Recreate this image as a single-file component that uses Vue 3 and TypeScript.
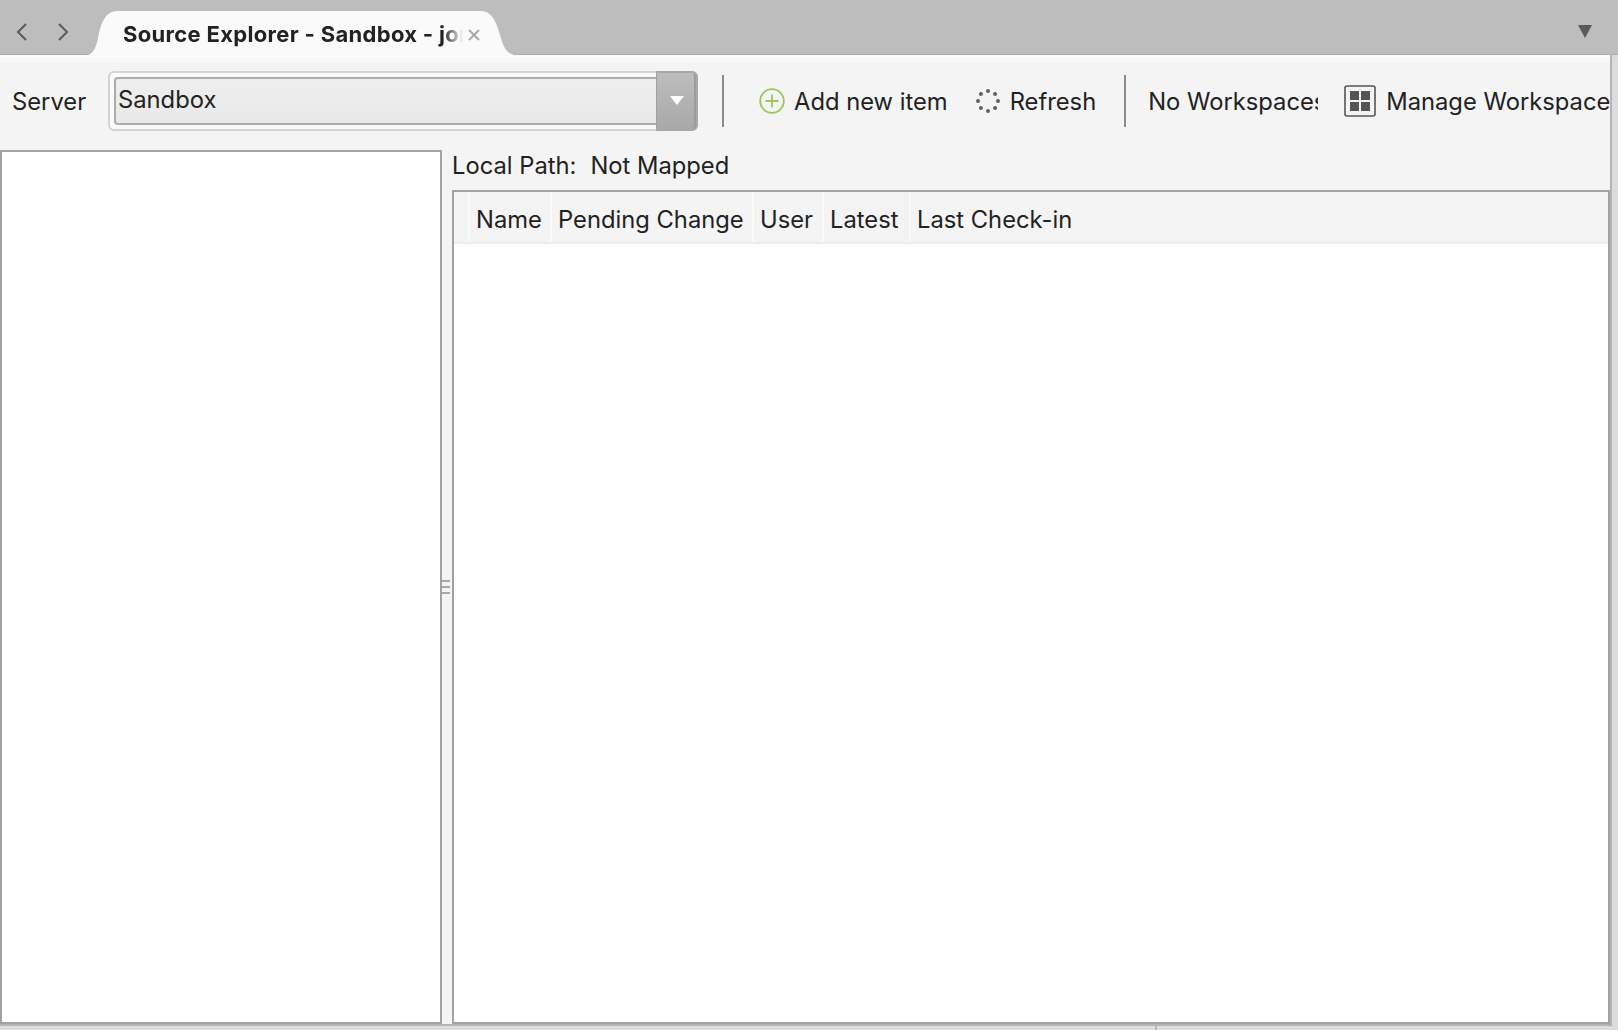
<script setup lang="ts">
const columns = [
  { label: '', width: 16 },
  { label: 'Name', width: 82 },
  { label: 'Pending Change', width: 202 },
  { label: 'User', width: 70 },
  { label: 'Latest', width: 87 },
  { label: 'Last Check-in', width: 0 },
];

const dots = Array.from({ length: 8 }, (_, i) => {
  const a = (i * Math.PI) / 4;
  return { x: 12 + 10 * Math.cos(a), y: 12 + 10 * Math.sin(a) };
});
</script>

<template>
  <div class="window">
    <div class="tabbar">
      <div class="nav">
        <svg width="14" height="20" viewBox="0 0 14 20"><path d="M11 2 3 10l8 8" fill="none" stroke="#5a5a5a" stroke-width="2" /></svg>
        <svg width="14" height="20" viewBox="0 0 14 20"><path d="m3 2 8 8-8 8" fill="none" stroke="#5a5a5a" stroke-width="2" /></svg>
      </div>
      <div class="tab">
        <svg class="tabShape" width="426" height="44" viewBox="0 0 426 44">
          <path d="M0 44C6 42 8 36 10 27 13 12 17 0 30 0H392C404 0 408 10 412 24 415 35 418 42 426 44Z" fill="#fafafa" />
        </svg>
        <span class="tabTitle">Source Explorer - Sandbox - jorge</span>
        <svg class="tabClose" width="14" height="14" viewBox="0 0 14 14"><path d="m2 2 10 10M12 2 2 12" fill="none" stroke="#a9a9a9" stroke-width="2" /></svg>
      </div>
      <div class="tabMenu"></div>
    </div>

    <div class="content">
      <div class="strip"></div>
      <div class="toolbar">
        <span class="serverLabel label">Server</span>
        <div class="combo">
          <div class="comboInner">Sandbox</div>
          <div class="comboBtn"><span class="comboArrow"></span></div>
        </div>
        <div class="sep sepFirst"></div>
        <svg class="addIcon" width="26" height="26" viewBox="0 0 26 26">
          <circle cx="13" cy="13" r="11.8" fill="none" stroke="#9bc75a" stroke-width="1.8" />
          <path d="M13 6.5v13M6.5 13h13" stroke="#9bc75a" stroke-width="1.8" />
        </svg>
        <span class="addText label">Add new item</span>
        <svg class="refreshIcon" width="24" height="24" viewBox="0 0 24 24">
          <circle v-for="(d, i) in dots" :key="i" :cx="d.x" :cy="d.y" r="2" fill="#606060" />
        </svg>
        <span class="refreshText label">Refresh</span>
        <div class="sep sepSecond"></div>
        <div class="workspaces label">No Workspaces</div>
        <svg class="manageIcon" width="32" height="32" viewBox="0 0 32 32">
          <rect x="1" y="1" width="30" height="30" rx="2" fill="#f4f4f4" stroke="#555" stroke-width="1.6" />
          <path d="M6 6h9v9H6zM17 6h9v9h-9zM6 17h9v9H6zM17 17h9v9h-9z" fill="#555" />
        </svg>
        <div class="manageText label">Manage Workspaces</div>
      </div>

      <div class="panes">
        <div class="leftPane"></div>
        <div class="splitter">
          <span></span><span></span><span></span>
        </div>
        <div class="rightSide">
          <div class="localPath"><span>Local Path:</span><span>Not Mapped</span></div>
          <div class="grid">
            <div class="gridHead">
              <div
                v-for="c in columns"
                :key="c.label"
                class="gridCol"
                :style="c.width ? { width: c.width + 'px' } : { flex: 1, borderRight: 'none' }"
              >{{ c.label }}</div>
            </div>
          </div>
        </div>
      </div>
    </div>

    <div class="footer"><span class="footerTick"></span></div>
  </div>
</template>

<style scoped>
.window {
  width: 1618px;
  height: 1030px;
  display: flex;
  flex-direction: column;
  overflow: hidden;
  background: #dcdcdc;
  color: #222;
  font-family: Inter, "Liberation Sans", sans-serif;
  font-size: 23.75px;
}

.tabbar {
  height: 55px;
  flex: none;
  display: flex;
  align-items: flex-start;
  background: #bdbdbd;
  border-bottom: 1px solid #adadad;
  box-sizing: border-box;
}

.nav {
  width: 88px;
  flex: none;
  padding: 22px 0 0 15px;
  box-sizing: border-box;
  display: flex;
  gap: 27px;
}

.tab {
  position: relative;
  width: 426px;
  height: 44px;
  margin-top: 11px;
  flex: none;
}

.tabShape {
  position: absolute;
  left: 0;
  top: 0;
}

.tabTitle {
  position: absolute;
  left: 35px;
  top: 10px;
  width: 340px;
  overflow: hidden;
  white-space: nowrap;
  font-size: 22px;
  font-weight: 700;
  letter-spacing: 0.32px;
  line-height: 27px;
  -webkit-mask-image: linear-gradient(90deg, #000 320px, transparent 340px);
  mask-image: linear-gradient(90deg, #000 320px, transparent 340px);
}

.tabClose {
  position: absolute;
  left: 379px;
  top: 17px;
}

.tabMenu {
  margin: 25px 0 0 1064px;
  width: 0;
  height: 0;
  border-left: 7px solid transparent;
  border-right: 7px solid transparent;
  border-top: 13px solid #5a5a5a;
}

.content {
  width: 1610px;
  height: 969px;
  flex: none;
  display: flex;
  flex-direction: column;
  background: #f4f4f4;
  border-right: 2px solid #b4b4b4;
  border-bottom: 2px solid #b4b4b4;
}

.strip {
  height: 7px;
  flex: none;
  background: #fafafa;
}

.toolbar {
  height: 88px;
  flex: none;
  box-sizing: border-box;
  padding-bottom: 11px;
  display: flex;
  align-items: center;
  white-space: nowrap;
  overflow: hidden;
}

.label {
  padding-top: 2px;
}

.serverLabel {
  margin-left: 12px;
  width: 96px;
  flex: none;
}

.combo {
  position: relative;
  width: 590px;
  height: 60px;
  flex: none;
  box-sizing: border-box;
  padding: 4px;
  background: #fafafa;
  border: 2px solid #d2d2d2;
  border-radius: 6px;
}

.comboInner {
  height: 100%;
  box-sizing: border-box;
  padding-left: 2px;
  line-height: 42px;
  border: 2px solid #acacac;
  border-radius: 4px;
  background: linear-gradient(#eeeeee, #e9e9e9);
}

.comboBtn {
  position: absolute;
  right: -2px;
  top: -2px;
  bottom: -2px;
  width: 42px;
  display: flex;
  align-items: center;
  justify-content: center;
  box-sizing: border-box;
  border: 2px solid #a8a8a8;
  border-left: 1px solid #a0a0a0;
  border-radius: 0 6px 6px 0;
  background: linear-gradient(#bdbdbd, #a9a9a9);
  box-shadow: inset -5px 0 0 -3px #9c9c9c;
}

.comboArrow {
  width: 0;
  height: 0;
  border-left: 7px solid transparent;
  border-right: 7px solid transparent;
  border-top: 9px solid #fff;
}

.sep {
  width: 2px;
  height: 52px;
  flex: none;
  background: #8a8a8a;
}

.sepFirst {
  margin-left: 24px;
}

.addIcon {
  margin-left: 35px;
  flex: none;
}

.addText {
  margin-left: 9px;
}

.refreshIcon {
  margin-left: 28px;
  flex: none;
}

.refreshText {
  margin-left: 10px;
}

.sepSecond {
  margin-left: 28px;
}

.workspaces {
  margin-left: 22px;
  width: 170px;
  flex: none;
  overflow: hidden;
}

.manageIcon {
  margin-left: 26px;
  flex: none;
}

.manageText {
  margin-left: 10px;
  flex: none;
}

.panes {
  flex: 1;
  min-height: 0;
  display: flex;
}

.leftPane {
  width: 442px;
  flex: none;
  box-sizing: border-box;
  background: #fff;
  border: 2px solid #a2a2a2;
}

.splitter {
  width: 10px;
  flex: none;
  display: flex;
  flex-direction: column;
  justify-content: center;
  gap: 4px;
  box-sizing: border-box;
}

.splitter span {
  height: 2px;
  width: 8px;
  background: #a8a8a8;
}

.rightSide {
  flex: 1;
  min-width: 0;
  display: flex;
  flex-direction: column;
}

.localPath {
  height: 40px;
  flex: none;
  display: flex;
  gap: 14px;
  align-items: center;
  padding-bottom: 10px;
  box-sizing: border-box;
}

.grid {
  flex: 1;
  min-height: 0;
  box-sizing: border-box;
  background: #fff;
  border: 2px solid #a2a2a2;
}

.gridHead {
  height: 52px;
  display: flex;
  background: #f4f4f4;
  border-bottom: 2px solid #ececec;
  box-sizing: border-box;
}

.gridCol {
  flex: none;
  box-sizing: border-box;
  padding-left: 6px;
  line-height: 56px;
  white-space: nowrap;
  border-right: 2px solid #fbfbfb;
}

.gridCol:first-child {
  padding-left: 0;
}

.footer {
  flex: 1;
  position: relative;
}

.footerTick {
  position: absolute;
  left: 1155px;
  top: 0;
  bottom: 0;
  width: 2px;
  background: #b4b4b4;
}
</style>
